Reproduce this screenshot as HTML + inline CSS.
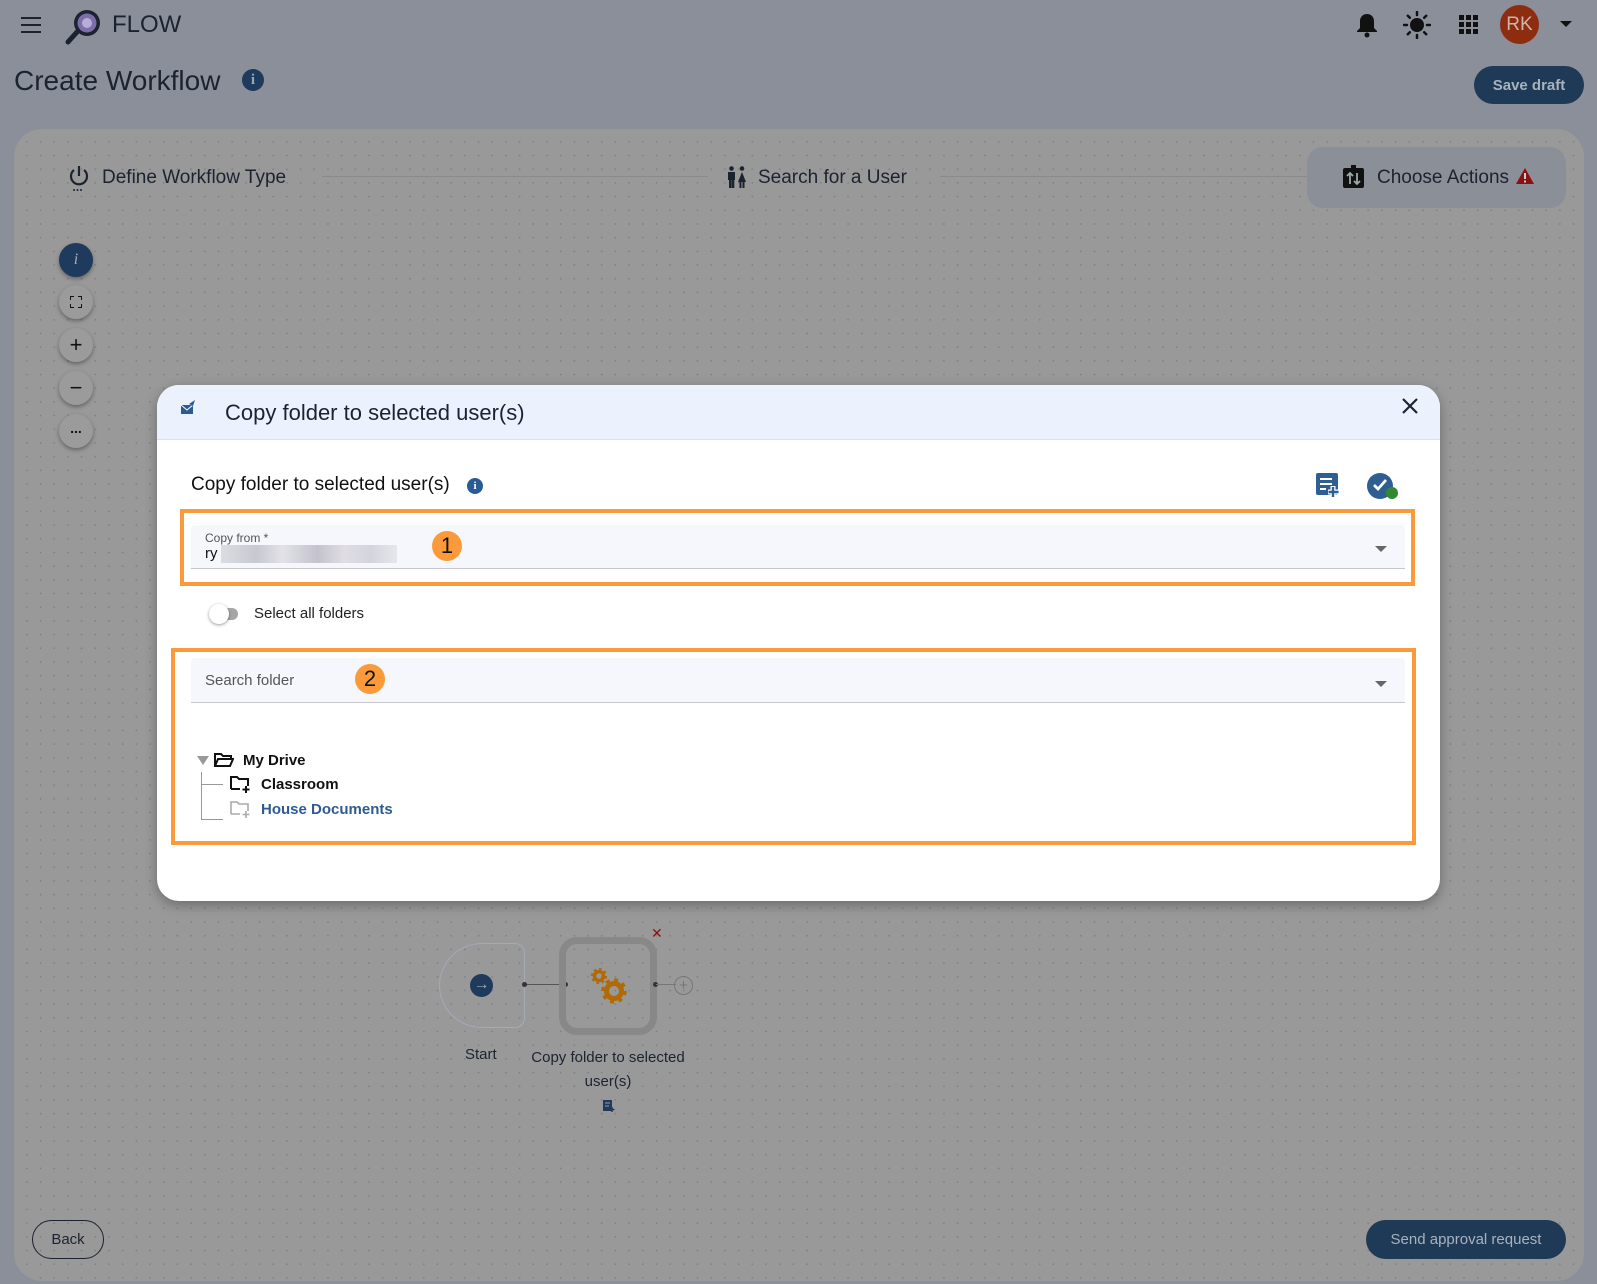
<!DOCTYPE html>
<html><head><meta charset="utf-8"><style>
*{box-sizing:border-box;margin:0;padding:0}
body{width:1597px;height:1284px;background:#8a8f99;font-family:"Liberation Sans",Arial,sans-serif;position:relative;overflow:hidden;color:#1c2330}
.a{position:absolute}
.card{left:14px;top:129px;width:1570px;height:1152px;background-color:#999;border-radius:28px;background-image:radial-gradient(circle,#808080 0.7px,transparent 1px);background-size:13.7px 13.7px;background-position:6px 6px}
.ctl{width:34px;height:34px;border-radius:50%;background:#9b9b9b;box-shadow:0 2px 4px rgba(0,0,0,.35);left:59px;display:flex;align-items:center;justify-content:center;font-size:18px;color:#111}
.modal{left:157px;top:385px;width:1283px;height:516px;background:#fff;border-radius:22px;overflow:hidden;box-shadow:0 4px 12px rgba(0,0,0,.3)}
.hdr{left:0;top:0;width:100%;height:55px;background:#ebf2fe;border-bottom:1px solid #dde0e6}
.ob{border:4px solid #fb9a3a}
.fld{background:#f6f7fc;border-bottom:1px solid #c8c8cc;border-radius:4px 4px 0 0}
.badge{width:30px;height:30px;border-radius:50%;background:#fb9a3a;color:#111;font-size:22px;display:flex;align-items:center;justify-content:center}
.caret{width:0;height:0;border-left:6px solid transparent;border-right:6px solid transparent;border-top:6px solid #666}
.btn{border-radius:20px;font-size:15px;display:flex;align-items:center;justify-content:center}
</style></head><body>
<div class="a" style="left:21px;top:17px;width:20px">
<div style="height:2px;background:#1c2330;margin-bottom:5px"></div><div style="height:2px;background:#1c2330;margin-bottom:5px"></div><div style="height:2px;background:#1c2330"></div></div>
<svg class="a" style="left:64px;top:7px" width="40" height="38" viewBox="0 0 40 38"><circle cx="23" cy="16" r="13" fill="#1c2330"/><circle cx="23" cy="16" r="9.5" fill="#7d6ea8"/><circle cx="23" cy="16" r="5" fill="#b9acd8"/><line x1="13" y1="25" x2="4" y2="35" stroke="#1c2330" stroke-width="5" stroke-linecap="round"/></svg>
<div class="a" style="left:112px;top:11px;font-size:24px;color:#1c2330">FLOW</div>
<svg class="a" style="left:1356px;top:12px" width="22" height="26" viewBox="0 0 22 26"><path d="M11 2c-4 0-7 3-7 7v7l-3 3v1h20v-1l-3-3V9c0-4-3-7-7-7z" fill="#111"/><circle cx="11" cy="23" r="2.5" fill="#111"/></svg>
<svg class="a" style="left:1403px;top:11px" width="28" height="28" viewBox="0 0 28 28"><circle cx="14" cy="14" r="7" fill="#111"/><g stroke="#111" stroke-width="2.5" stroke-linecap="round"><path d="M14 1v3M14 24v3M1 14h3M24 14h3M4.8 4.8l2 2M21.2 21.2l2 2M4.8 23.2l2-2M21.2 6.8l2-2"/></g></svg>
<svg class="a" style="left:1459px;top:15px" width="20" height="20"><g fill="#111"><rect x="0" y="0" width="5" height="5"/><rect x="7" y="0" width="5" height="5"/><rect x="14" y="0" width="5" height="5"/><rect x="0" y="7" width="5" height="5"/><rect x="7" y="7" width="5" height="5"/><rect x="14" y="7" width="5" height="5"/><rect x="0" y="14" width="5" height="5"/><rect x="7" y="14" width="5" height="5"/><rect x="14" y="14" width="5" height="5"/></g></svg>
<div class="a" style="left:1500px;top:5px;width:39px;height:39px;border-radius:50%;background:#8e2c10;color:#c9b7b0;font-size:19px;display:flex;align-items:center;justify-content:center">RK</div>
<div class="a caret" style="left:1560px;top:21px;border-top-color:#111"></div>
<div class="a" style="left:14px;top:65px;font-size:28px;color:#1c2330">Create Workflow</div>
<div class="a" style="left:242px;top:69px;width:22px;height:22px;border-radius:50%;background:#1e3a5c;color:#9aa;font-size:15px;font-weight:bold;text-align:center;line-height:22px;font-family:'Liberation Serif'">i</div>
<div class="a btn" style="left:1474px;top:66px;width:110px;height:38px;background:#1f3a57;color:#a9b2bd;font-weight:bold">Save draft</div>

<div class="a card"></div>
<svg class="a" style="left:68px;top:164px" width="22" height="28" viewBox="0 0 22 28"><path d="M6 6a8 8 0 1 0 10 0" fill="none" stroke="#1c2330" stroke-width="2.2"/><line x1="11" y1="2" x2="11" y2="12" stroke="#1c2330" stroke-width="2.2"/><g fill="#1c2330"><circle cx="6" cy="26" r="1"/><circle cx="9.5" cy="26" r="1"/><circle cx="13" cy="26" r="1"/></g></svg>
<div class="a" style="left:102px;top:167px;font-size:19px">Define Workflow Type</div>
<div class="a" style="left:322px;top:176px;width:386px;height:1px;background:#8a8a8a"></div>
<svg class="a" style="left:727px;top:166px" width="20" height="22" viewBox="0 0 20 22"><g fill="#1c2330"><circle cx="4.5" cy="2.5" r="2.3"/><circle cx="15" cy="2.5" r="2.3"/><rect x="1" y="6" width="7" height="8"/><rect x="2" y="13" width="2.5" height="9"/><rect x="4.8" y="13" width="2.5" height="9"/><path d="M15 6l4 10h-8z"/><rect x="12.5" y="15" width="2" height="7"/><rect x="15.5" y="15" width="2" height="7"/></g></svg>
<div class="a" style="left:758px;top:167px;font-size:19px">Search for a User</div>
<div class="a" style="left:940px;top:176px;width:367px;height:1px;background:#8a8a8a"></div>
<div class="a" style="left:1307px;top:147px;width:259px;height:61px;background:#8b9098;border-radius:16px"></div>
<svg class="a" style="left:1343px;top:165px" width="21" height="23" viewBox="0 0 21 23"><rect x="0" y="3" width="21" height="20" rx="2" fill="#111"/><rect x="8" y="0" width="5" height="4" fill="#111"/><path d="M7 19V8M4 11l3-3 3 3M14 8v11M11 16l3 3 3-3" stroke="#9aa" stroke-width="1.8" fill="none"/></svg>
<div class="a" style="left:1377px;top:167px;font-size:19px">Choose Actions</div>
<svg class="a" style="left:1515px;top:167px" width="20" height="18"><path d="M10 1L19 17H1z" fill="#8b1010"/><rect x="9" y="6" width="2" height="6" fill="#ccc"/><rect x="9" y="13.5" width="2" height="2" fill="#ccc"/></svg>

<div class="a ctl" style="top:243px;background:#1e3a5c;color:#aab;font-family:'Liberation Serif';font-style:italic;font-size:16px">i</div>
<div class="a ctl" style="top:285px"><svg width="12" height="12"><path d="M0 4V0h4M8 0h4v4M12 8v4H8M4 12H0V8" stroke="#111" stroke-width="2" fill="none"/></svg></div>
<div class="a ctl" style="top:328px;font-size:22px">+</div>
<div class="a ctl" style="top:371px;font-size:22px">−</div>
<div class="a ctl" style="top:414px;font-weight:bold;font-size:14px;padding-bottom:6px">...</div>

<div class="a" style="left:439px;top:943px;width:86px;height:85px;border:1px solid #a5aab8;border-radius:50% 10px 10px 50%"></div>
<div class="a" style="left:470px;top:974px;width:23px;height:23px;border-radius:50%;background:#1e3a5c;color:#aaa;font-size:16px;text-align:center;line-height:22px">→</div>
<div class="a" style="left:525px;top:984px;width:40px;height:1px;background:#555"></div>
<div class="a" style="left:522px;top:982px;width:5px;height:5px;border-radius:50%;background:#333"></div>
<div class="a" style="left:563px;top:982px;width:5px;height:5px;border-radius:50%;background:#333"></div>
<div class="a" style="left:559px;top:937px;width:98px;height:98px;border:7px solid #888;border-radius:18px"></div>
<svg class="a" style="left:590px;top:967px" width="40" height="38" viewBox="0 0 40 38">
<circle cx="9" cy="9" r="4.5" fill="none" stroke="#b06a08" stroke-width="3.5"/><circle cx="9" cy="9" r="6.8" fill="none" stroke="#b06a08" stroke-width="2.5" stroke-dasharray="2.6 2.7"/>
<circle cx="24" cy="24" r="7.5" fill="none" stroke="#b06a08" stroke-width="5"/><circle cx="24" cy="24" r="11" fill="none" stroke="#b06a08" stroke-width="3.5" stroke-dasharray="4 4.6"/></svg>
<div class="a" style="left:653px;top:982px;width:5px;height:5px;border-radius:50%;background:#333"></div>
<div class="a" style="left:656px;top:984px;width:20px;height:1px;background:#777"></div>
<div class="a" style="left:674px;top:976px;width:19px;height:19px;border-radius:50%;border:1px solid #777;color:#777;font-size:15px;text-align:center;line-height:17px">+</div>
<div class="a" style="left:651px;top:925px;color:#8b1010;font-size:14px">✕</div>
<div class="a" style="left:465px;top:1046px;font-size:15px">Start</div>
<div class="a" style="left:520px;top:1046px;width:176px;text-align:center;font-size:15px;line-height:24px">Copy folder to selected user(s)</div>
<svg class="a" style="left:603px;top:1100px" width="12" height="12"><rect x="0" y="0" width="9" height="11" fill="#1e3a5c"/><path d="M2 3h5M2 6h4" stroke="#999"/><path d="M9 7v5M6.5 9.5h5" stroke="#1e3a5c" stroke-width="1.5"/></svg>

<div class="a btn" style="left:32px;top:1220px;width:72px;height:39px;border:1.5px solid #1c2330;color:#1c2330">Back</div>
<div class="a btn" style="left:1366px;top:1220px;width:200px;height:39px;background:#1f3a57;color:#a9b2bd">Send approval request</div>

<div class="a modal">
 <div class="a hdr"></div>
 <svg class="a" style="left:24px;top:15px" width="14" height="15" viewBox="0 0 14 15"><rect x="0" y="5" width="12" height="9" fill="#2b5b94"/><path d="M0 5l6 5 6-5" stroke="#fff" fill="none"/><path d="M8 4l6-4-2 6z" fill="#2b5b94"/></svg>
 <div class="a" style="left:68px;top:15px;font-size:22px;color:#1c2330">Copy folder to selected user(s)</div>
 <svg class="a" style="left:1244px;top:12px" width="18" height="18"><path d="M2 2l14 14M16 2L2 16" stroke="#1c2330" stroke-width="2.2"/></svg>
 <div class="a" style="left:34px;top:89px;font-size:19px;color:#111">Copy folder to selected user(s)</div>
 <div class="a" style="left:310px;top:93px;width:16px;height:16px;border-radius:50%;background:#2b5b94;color:#fff;font-size:11px;font-weight:bold;text-align:center;line-height:16px;font-family:'Liberation Serif'">i</div>
 <svg class="a" style="left:1159px;top:88px" width="24" height="25" viewBox="0 0 24 25"><rect x="0" y="0" width="22" height="22" rx="2" fill="#2f5e93"/><path d="M4 6h12M4 11h12M4 16h6" stroke="#fff" stroke-width="2"/><path d="M17 13v11M12 19h11" stroke="#fff" stroke-width="5"/><path d="M17 14v10M12.5 19h10" stroke="#2f5e93" stroke-width="2.4"/></svg>
 <div class="a" style="left:1210px;top:88px;width:26px;height:26px;border-radius:50%;background:#2f5e93"></div>
 <svg class="a" style="left:1214px;top:92px" width="18" height="16"><path d="M3 8l4 4 8-9" stroke="#fff" stroke-width="2.8" fill="none"/></svg>
 <div class="a" style="left:1229px;top:102px;width:12px;height:12px;border-radius:50%;background:#2f8a2f"></div>

 <div class="a ob" style="left:23px;top:124px;width:1235px;height:77px"></div>
 <div class="a fld" style="left:34px;top:140px;width:1214px;height:44px"></div>
 <div class="a" style="left:48px;top:146px;font-size:12px;color:#555">Copy from *</div>
 <div class="a" style="left:48px;top:160px;font-size:15px;color:#111">ry</div>
 <div class="a" style="left:64px;top:160px;width:176px;height:18px;background:linear-gradient(90deg,#dcdce3,#c8c8d0 20%,#e2e2e8 35%,#c4c2cc 55%,#e0dde4 70%,#d4d4dc 85%,#e6e6ec)"></div>
 <div class="a badge" style="left:275px;top:146px">1</div>
 <div class="a caret" style="left:1218px;top:161px"></div>

 <div class="a" style="left:55px;top:223px;width:26px;height:12px;border-radius:6px;background:#a6a6a6"></div>
 <div class="a" style="left:52px;top:219px;width:20px;height:20px;border-radius:50%;background:#fff;box-shadow:0 1px 3px rgba(0,0,0,.4)"></div>
 <div class="a" style="left:97px;top:220px;font-size:15px;color:#222">Select all folders</div>

 <div class="a ob" style="left:14px;top:263px;width:1245px;height:197px"></div>
 <div class="a fld" style="left:34px;top:273px;width:1214px;height:45px"></div>
 <div class="a" style="left:48px;top:287px;font-size:15px;color:#555">Search folder</div>
 <div class="a badge" style="left:198px;top:279px">2</div>
 <div class="a caret" style="left:1218px;top:296px"></div>

 <div class="a" style="left:40px;top:371px;width:0;height:0;border-left:6px solid transparent;border-right:6px solid transparent;border-top:9px solid #999"></div>
 <svg class="a" style="left:57px;top:367px" width="20" height="16" viewBox="0 0 20 16"><path d="M1 14V2h6l2 2h8v3M1 14l3-7h15l-3 7z" fill="none" stroke="#111" stroke-width="2"/></svg>
 <div class="a" style="left:86px;top:367px;font-size:15px;font-weight:bold;color:#111">My Drive</div>
 <div class="a" style="left:44px;top:387px;width:1px;height:47px;background:#999"></div>
 <div class="a" style="left:44px;top:399px;width:22px;height:1px;background:#999"></div>
 <div class="a" style="left:44px;top:434px;width:22px;height:1px;background:#999"></div>
 <svg class="a" style="left:73px;top:390px" width="21" height="18" viewBox="0 0 21 18"><path d="M1 14V2h6l2 2h9v7" fill="none" stroke="#111" stroke-width="2"/><path d="M1 14h9" stroke="#111" stroke-width="2"/><path d="M16 11v7M12.5 14.5h7" stroke="#111" stroke-width="2"/></svg>
 <div class="a" style="left:104px;top:391px;font-size:15px;font-weight:bold;color:#111">Classroom</div>
 <svg class="a" style="left:73px;top:415px" width="21" height="18" viewBox="0 0 21 18"><path d="M1 14V2h6l2 2h9v7" fill="none" stroke="#aaa" stroke-width="1.6"/><path d="M1 14h9" stroke="#aaa" stroke-width="1.6"/><path d="M16 11v7M12.5 14.5h7" stroke="#aaa" stroke-width="1.6"/></svg>
 <div class="a" style="left:104px;top:416px;font-size:15px;font-weight:bold;color:#2e5c92">House Documents</div>
</div>
</body></html>
